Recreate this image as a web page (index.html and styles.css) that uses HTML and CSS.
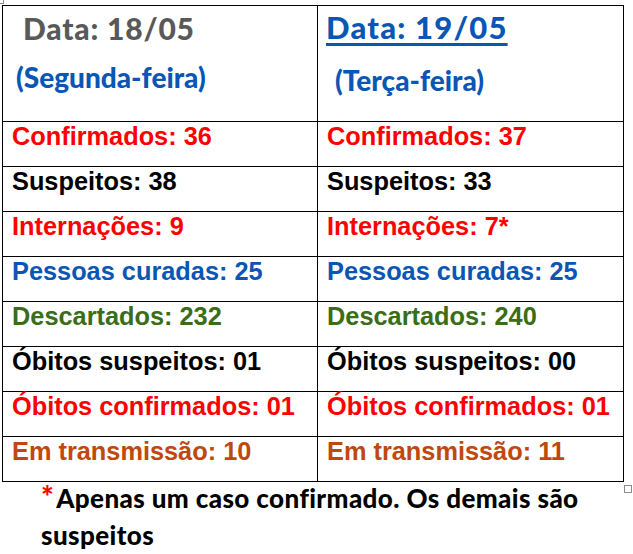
FILE: index.html
```html
<!DOCTYPE html>
<html lang="pt">
<head>
<meta charset="utf-8">
<title>Boletim</title>
<link rel="stylesheet" href="styles.css">
</head>
<body>
<div class="page">
  <span class="handle handle-tl"></span>
  <table class="boletim">
    <colgroup><col class="col-a"><col class="col-b"></colgroup>
    <tr class="head">
      <td>
        <span class="date date-gray">Data: 18/05</span>
        <span class="day day-left">(Segunda-feira)</span>
      </td>
      <td>
        <span class="date date-blue">Data: 19/05</span>
        <span class="day day-right">(Terça-feira)</span>
      </td>
    </tr>
    <tr class="red"><td>Confirmados: 36</td><td>Confirmados: 37</td></tr>
    <tr class="black"><td>Suspeitos: 38</td><td>Suspeitos: 33</td></tr>
    <tr class="red"><td>Internações: 9</td><td>Internações: 7*</td></tr>
    <tr class="blue"><td>Pessoas curadas: 25</td><td>Pessoas curadas: 25</td></tr>
    <tr class="green"><td>Descartados: 232</td><td>Descartados: 240</td></tr>
    <tr class="black"><td>Óbitos suspeitos: 01</td><td>Óbitos suspeitos: 00</td></tr>
    <tr class="red"><td>Óbitos confirmados: 01</td><td>Óbitos confirmados: 01</td></tr>
    <tr class="orange"><td>Em transmissão: 10</td><td>Em transmissão: 11</td></tr>
  </table>
  <span class="handle handle-br"></span>
  <p class="note">
    <span class="note-line"><span class="star">*</span><span>Apenas um caso confirmado. Os demais são</span></span>
    <span class="note-line">suspeitos</span>
  </p>
</div>
</body>
</html>
```

FILE: styles.css
```css
html, body {
  margin: 0;
  padding: 0;
  background: #ffffff;
}

.page {
  position: relative;
  width: 633px;
  height: 554px;
  overflow: hidden;
}

.boletim {
  border-collapse: collapse;
  margin: 5px 0 0 2px;
  width: 621px;
  table-layout: fixed;
  font-family: "Liberation Sans", Arial, sans-serif;
  font-weight: bold;
  font-size: 25.33px;
  line-height: 29px;
}

.col-a { width: 315px; }
.col-b { width: 306px; }

.boletim td {
  border: 1px solid #000000;
  padding: 0 0 0 9px;
  vertical-align: top;
  height: 44px;
  white-space: nowrap;
}

.boletim .head td {
  height: 115px;
  padding: 0;
  font-family: Lato, "Open Sans", sans-serif;
  font-weight: 900;
  line-height: 1.2;
}

.date {
  display: block;
  font-size: 30px;
  letter-spacing: 0.8px;
}

.date-gray {
  color: #595959;
  margin: 4px 0 0 20px;
}

.date-blue {
  color: #0a56b4;
  font-size: 31px;
  letter-spacing: 1.2px;
  margin: 3px 0 0 8px;
  text-decoration: underline;
  text-decoration-thickness: 2.5px;
  text-underline-offset: 4px;
}

.day {
  display: block;
  font-size: 28px;
  color: #0a56b4;
}

.day-left {
  margin: 15px 0 0 13px;
}

.day-right {
  margin: 18px 0 0 17px;
}

.red td { color: #ff0000; }
.black td { color: #000000; }
.blue td { color: #0a56b4; }
.green td { color: #3a6d17; }
.orange td { color: #c0480e; }

.note {
  margin: -2px 0 0 41px;
  font-family: Lato, "Open Sans", sans-serif;
  font-weight: 900;
  font-size: 26px;
  letter-spacing: 0.4px;
  line-height: 37px;
  color: #000000;
}

.note-line {
  display: block;
  height: 37px;
  white-space: nowrap;
}

.star {
  color: #ff0000;
  font-size: 30px;
  line-height: 0;
  margin-right: 2px;
}

.handle {
  position: absolute;
  display: block;
  border: 1px solid #8c8c8c;
  background: #ffffff;
}

.handle-tl {
  left: -3px;
  top: -3px;
  width: 5px;
  height: 5px;
}

.handle-br {
  left: 624px;
  top: 485px;
  width: 6px;
  height: 6px;
}
```
